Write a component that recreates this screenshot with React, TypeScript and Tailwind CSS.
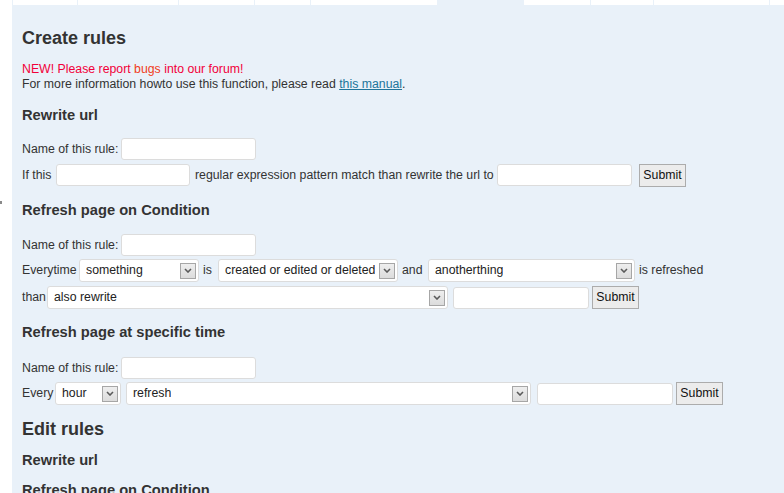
const font = "font-['Liberation_Sans',Arial,sans-serif]";

const tabs = [
  "ml-px w-[64px] bg-white",
  "ml-px w-[100px] bg-white",
  "ml-px w-[75px] bg-white",
  "ml-px w-[55px] bg-white",
  "ml-px w-[126px] bg-white",
  "w-[87px]",
  "w-[66px] bg-white",
  "ml-px w-[62px] bg-white",
  "ml-px w-[115px] bg-white",
  "ml-px flex-1 bg-white",
];

function TextInput({ className = "" }: { className?: string }) {
  return <div className={`h-[22px] shrink-0 rounded-[3px] border border-[#dcdcdc] bg-white ${className}`} />;
}

function Select({ value, className = "" }: { value: string; className?: string }) {
  return (
    <div className={`flex h-[23px] shrink-0 items-center justify-between rounded-[3px] border border-[#dcdcdc] bg-white pl-[6px] pr-[2px] ${className}`}>
      <span className="truncate text-[12.3px] text-[#222]">{value}</span>
      <span className="flex h-[16px] w-[16px] shrink-0 items-center justify-center border border-[#a6a6a6] bg-gradient-to-b from-[#eeeeee] to-[#dcdcdc]">
        <svg width="8" height="5" viewBox="0 0 8 5" fill="none">
          <polyline points="1,1 4,4 7,1" stroke="#5a5a5a" strokeWidth="1.6" />
        </svg>
      </span>
    </div>
  );
}

function SubmitButton({ className = "" }: { className?: string }) {
  return (
    <div className={`flex h-[23px] w-[47px] shrink-0 items-center justify-center border border-[#acacac] bg-[#ececec] text-[12.3px] text-[#111] ${className}`}>
      Submit
    </div>
  );
}

function Label({ children, className = "" }: { children: React.ReactNode; className?: string }) {
  return <span className={`shrink-0 whitespace-nowrap ${className}`}>{children}</span>;
}

function H3({ children, className = "" }: { children: React.ReactNode; className?: string }) {
  return <h3 className={`text-[14.7px] font-bold leading-[17px] text-[#333] ${className}`}>{children}</h3>;
}

function H2({ children, className = "" }: { children: React.ReactNode; className?: string }) {
  return <h2 className={`text-[18px] font-bold leading-[21px] text-[#333] ${className}`}>{children}</h2>;
}

function NameRow({ className = "" }: { className?: string }) {
  return (
    <div className={`flex h-[22px] items-center ${className}`}>
      <Label className="w-[99px]">Name of this rule:</Label>
      <TextInput className="w-[135px]" />
    </div>
  );
}

export default function App() {
  return (
    <div className={`flex min-h-[493px] overflow-hidden bg-white ${font}`}>
      <div className="w-[12px] shrink-0">
        <div className="mt-[201px] h-[3px] w-[2px] bg-[#8a8a8a]" />
      </div>

      <div className="flex-1 bg-[#e9f1f9]">
        <div className="flex h-[5px]">
          {tabs.map((cls, i) => <div key={i} className={cls} />)}
        </div>

        <div className="pl-[10px] text-[12.3px] text-[#333]">
          <H2 className="mt-[23px]">Create rules</H2>

          <div className="mt-[13px] leading-[15px]">
            <div className="text-[#f2003a]">
              NEW! Please report <span className="text-[#f03c22]">bugs</span> into our forum!
            </div>
            <div>
              For more information howto use this function, please read{" "}
              <a className="text-[#21759b] underline">this manual</a>.
            </div>
          </div>

          <H3 className="mt-[15px]">Rewrite url</H3>
          <NameRow className="mt-[14px]" />
          <div className="mt-[4px] flex h-[22px] items-center">
            <Label className="w-[34px]">If this</Label>
            <TextInput className="w-[134px]" />
            <Label className="ml-[5px] w-[302px]">regular expression pattern match than rewrite the url to</Label>
            <TextInput className="w-[135px]" />
            <SubmitButton className="ml-[7px]" />
          </div>

          <H3 className="mt-[16px]">Refresh page on Condition</H3>
          <NameRow className="mt-[15px]" />
          <div className="mt-[3px] flex h-[23px] items-center">
            <Label className="w-[57px]">Everytime</Label>
            <Select value="something" className="w-[120px]" />
            <Label className="w-[19px] pl-[4px]">is</Label>
            <Select value="created or edited or deleted" className="w-[180px]" />
            <Label className="w-[30px] pl-[4px]">and</Label>
            <Select value="anotherthing" className="w-[207px]" />
            <Label className="pl-[4px]">is refreshed</Label>
          </div>
          <div className="mt-[4px] flex h-[23px] items-center">
            <Label className="w-[25px]">than</Label>
            <Select value="also rewrite" className="w-[401px]" />
            <TextInput className="ml-[5px] w-[136px]" />
            <SubmitButton className="ml-[3px]" />
          </div>

          <H3 className="mt-[15px]">Refresh page at specific time</H3>
          <NameRow className="mt-[16px]" />
          <div className="mt-[3px] flex h-[23px] items-center">
            <Label className="w-[33px]">Every</Label>
            <Select value="hour" className="w-[66px]" />
            <Select value="refresh" className="ml-[5px] w-[405px]" />
            <TextInput className="ml-[6px] w-[136px]" />
            <SubmitButton className="ml-[3px]" />
          </div>

          <H2 className="mt-[14px]">Edit rules</H2>
          <H3 className="mt-[12px]">Rewrite url</H3>
          <H3 className="mt-[13px]">Refresh page on Condition</H3>
        </div>
      </div>
    </div>
  );
}
